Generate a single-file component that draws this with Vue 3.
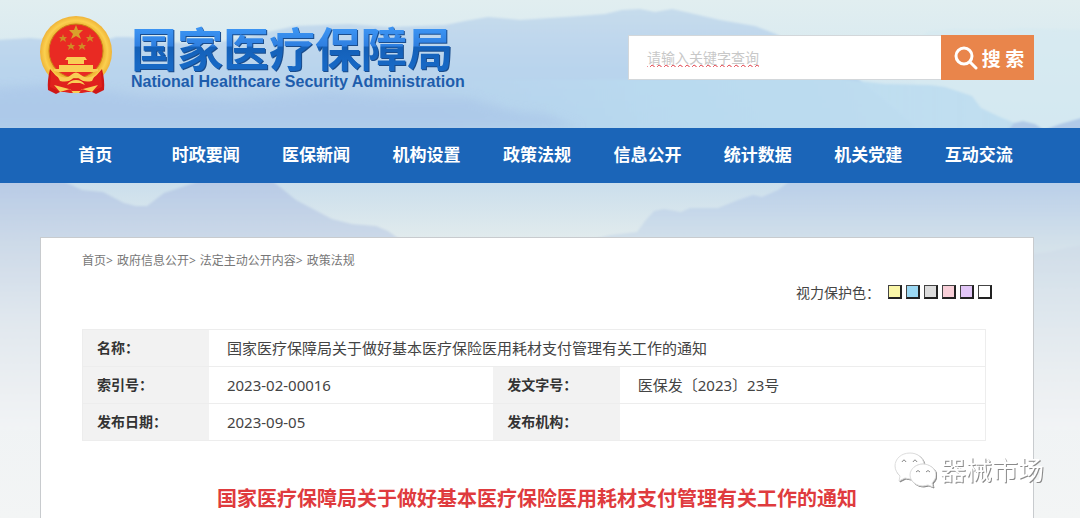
<template>
  <div class="page">
    <svg class="scenery" viewBox="0 0 1080 518" preserveAspectRatio="none" aria-hidden="true">
      <defs>
        <linearGradient id="sky" x1="0" y1="0" x2="0" y2="1">
          <stop offset="0" stop-color="#e1eef0" />
          <stop offset="0.23" stop-color="#cfe5f1" />
          <stop offset="0.35" stop-color="#cadeec" />
          <stop offset="0.46" stop-color="#e1ebed" />
          <stop offset="0.65" stop-color="#edf1f4" />
          <stop offset="1" stop-color="#f3f5f5" />
        </linearGradient>
        <linearGradient id="far" gradientUnits="userSpaceOnUse" x1="0" y1="10" x2="0" y2="128">
          <stop offset="0" stop-color="#c6dbec" />
          <stop offset="0.5" stop-color="#b9d4ed" />
          <stop offset="1" stop-color="#b4d0ea" />
        </linearGradient>
        <linearGradient id="mid" gradientUnits="userSpaceOnUse" x1="430" y1="0" x2="1020" y2="0">
          <stop offset="0" stop-color="#b9dbf0" stop-opacity="0" />
          <stop offset="0.35" stop-color="#b9dbf0" stop-opacity="0.8" />
          <stop offset="1" stop-color="#c0def0" />
        </linearGradient>
        <linearGradient id="near" gradientUnits="userSpaceOnUse" x1="0" y1="182" x2="0" y2="430">
          <stop offset="0" stop-color="#b8cbe6" />
          <stop offset="0.25" stop-color="#cddae8" />
          <stop offset="0.55" stop-color="#e0e7ee" />
          <stop offset="1" stop-color="#f2f4f5" />
        </linearGradient>
        <linearGradient id="right" gradientUnits="userSpaceOnUse" x1="0" y1="182" x2="0" y2="430">
          <stop offset="0" stop-color="#bacfe9" />
          <stop offset="0.25" stop-color="#d3e1ea" />
          <stop offset="0.5" stop-color="#dfe7ed" />
          <stop offset="1" stop-color="#f2f4f5" />
        </linearGradient>
        <linearGradient id="edge" gradientUnits="userSpaceOnUse" x1="0" y1="245" x2="0" y2="400">
          <stop offset="0" stop-color="#d0dde8" />
          <stop offset="1" stop-color="#edf0f3" stop-opacity="0" />
        </linearGradient>
        <filter id="haze" x="-5%" y="-5%" width="110%" height="110%">
          <feGaussianBlur stdDeviation="1" />
        </filter>
        <filter id="mist" x="-5%" y="-20%" width="110%" height="140%">
          <feGaussianBlur stdDeviation="5" />
        </filter>
      </defs>
      <rect width="1080" height="518" fill="url(#sky)" />
      <g filter="url(#haze)">
        <path fill="url(#far)" d="M-5 40 30 38 60 41 100 42 116 37 130 37 160 42 210 44 250 36 295 26 350 24 390 27 445 25 465 21 488 17 520 20 580 16 605 14 622 10 640 9 655 12 672 9 690 13 720 20 755 26 776 34 860 80 920 130 -5 130Z" />
        <path fill="#d6e9f1" opacity=".7" d="M915 39 930 31 955 29 1000 30 1020 28 1085 30 1085 130 915 130Z" />
        <path fill="url(#mid)" d="M430 130 430 80 790 79 840 79 885 84 930 85 945 87 972 96 981 108 1000 117 1015 123 1025 130Z" />
        <path fill="#b1cae8" d="M1008 130 1014 123 1023 121 1035 124 1044 130 1060 124 1085 117 1085 130Z" />
        <path fill="url(#near)" d="M-5 178 65 182 82 190 103 192 124 203 136 206 147 206 164 193 194 183 205 178 268 178 280 187 296 200 332 219 352 224 376 226 388 231 405 243 500 430 -5 430Z" />
        <path fill="url(#right)" d="M590 240 610 235 637 232 645 221 654 211 664 209 681 212 690 208 718 208 738 200 753 195 762 197 778 190 794 178 1085 178 1085 430 590 430Z" />
        <path fill="url(#edge)" d="M1025 255 1050 252 1062 249 1085 244 1085 400 1025 400Z" />
      </g>
      <path fill="#a8c5e8" opacity=".6" filter="url(#mist)" d="M-20 90 60 84 140 96 240 100 330 92 400 98 470 98 510 110 545 114 580 127 -20 127Z" />
      <rect width="1080" height="5" y="178" fill="#1b65b8" />
    </svg>

    <header class="header">
      <a class="brand" href="#">
        <svg class="emblem" viewBox="0 0 74 80" aria-hidden="true">
          <defs>
            <radialGradient id="gold">
              <stop offset="0.7" stop-color="#e9a526" />
              <stop offset="0.87" stop-color="#fbd04f" />
              <stop offset="1" stop-color="#efb338" />
            </radialGradient>
          </defs>
          <circle cx="37" cy="37" r="36" fill="url(#gold)" />
          <path fill="#cf1717" d="M11 54Q8 66 9 75L17 79 21 77H53L57 79 65 75Q66 66 63 54L53 66H21Z" />
          <path fill="#e0211d" d="M12 56Q20 66 31 65L37 62 43 65Q54 66 62 56L63 72 54 76 43 78H31L20 76 11 72Z" />
          <circle cx="37" cy="36" r="27" fill="#e92a23" stroke="#c98418" />
          <path fill="#d9a02b" d="m37 10 2 5h5l-4 4 2 5-5-3-5 3 2-5-4-4h5z" />
          <g fill="#cf8c25">
            <path id="star" d="m24 19 1 3h3l-2 2 1 3-3-2-3 2 1-3-2-2h3z" />
            <use href="#star" x="27" />
            <use href="#star" x="8" y="8" />
            <use href="#star" x="19" y="8" />
          </g>
          <g fill="#f9ce55">
            <path d="M28 42h18l2 3h-3v4H29v-4h-3zM20 50h34v4H20zM15 54h44v2l-4 1H19l-4-1z" />
            <path d="M18 60Q27 65 32 60T42 60Q48 65 56 60L53 66Q44 68 40 63H34Q30 68 21 66Z" />
            <path d="M28 70Q31 65 37 65T46 70L41 68H33ZM15 70 30 74 33 76H41L44 74 59 70 53 77 43 74 40 78H34L31 74 21 77Z" />
          </g>
        </svg>
        <span class="brand-text">
          <span class="brand-cn">国家医疗保障局</span>
          <span class="brand-en">National Healthcare Security Administration</span>
        </span>
      </a>

      <form class="search" @submit.prevent>
        <input v-model="keyword" type="text" aria-label="请输入关键字查询" placeholder="请输入关键字查询" />
        <button type="submit">
          <svg viewBox="0 0 24 24" aria-hidden="true">
            <circle cx="10" cy="10" r="8" />
            <path d="m16 16 6 6" />
          </svg>
          搜 索
        </button>
      </form>
    </header>

    <nav class="nav">
      <a v-for="item in navItems" :key="item" href="#">{{ item }}</a>
    </nav>

    <main class="panel">
      <div class="crumbs">
        <template v-for="(crumb, index) in crumbs" :key="crumb">
          <a href="#">{{ crumb }}</a><span v-if="index < crumbs.length - 1" class="sep">&gt;</span>
        </template>
      </div>

      <div class="eye-care">
        <span>视力保护色：</span>
        <button
          v-for="color in colors"
          :key="color"
          type="button"
          :aria-label="color"
          :style="{ backgroundColor: color }"
          @click="background = color"
        ></button>
      </div>

      <table class="info">
        <colgroup>
          <col class="col-label" />
          <col class="col-value" />
          <col class="col-label" />
          <col />
        </colgroup>
        <tbody>
          <tr>
            <th scope="row">名称：</th>
            <td colspan="3">{{ title }}</td>
          </tr>
          <tr>
            <th scope="row">索引号：</th>
            <td>2023-02-00016</td>
            <th scope="row">发文字号：</th>
            <td>医保发〔2023〕23号</td>
          </tr>
          <tr>
            <th scope="row">发布日期：</th>
            <td>2023-09-05</td>
            <th scope="row">发布机构：</th>
            <td></td>
          </tr>
        </tbody>
      </table>

      <h1>{{ title }}</h1>
    </main>

    <div class="watermark">
      <svg viewBox="0 0 42 36" aria-hidden="true">
        <path d="M16 1C7 1 1 7 1 14c0 4 2 7 5 10l-1 5 6-3 5 1h1c-2-9 4-15 13-15C29 5 23 1 16 1Z" />
        <path d="M29 12c-7 0-13 5-13 11s6 11 13 11l5-1 5 2-1-4c2-2 4-5 4-8 0-6-6-11-13-11Z" />
        <g class="eyes">
          <path d="M8 10q2-4 4 0M19 10q2-4 4 0M22 20q2-3 4 0M32 20q2-3 4 0" />
        </g>
      </svg>
      <span>器械市场</span>
    </div>
  </div>
</template>

<script setup>
import { ref } from 'vue';

const title = '国家医疗保障局关于做好基本医疗保险医用耗材支付管理有关工作的通知';
const navItems = ['首页', '时政要闻', '医保新闻', '机构设置', '政策法规', '信息公开', '统计数据', '机关党建', '互动交流'];
const crumbs = ['首页', '政府信息公开', '法定主动公开内容', '政策法规'];
const colors = ['#faf6a8', '#9bd8f3', '#dcdcdc', '#f8cfd8', '#e2c6f7', '#ffffff'];

const keyword = ref('');
const background = ref('#ffffff');
</script>

<style>
body {
  margin: 0;
}
</style>

<style scoped>
.page {
  box-sizing: border-box;
  color: #444;
  display: flex;
  flex-direction: column;
  font-family: "Noto Sans", "Noto Sans CJK SC", sans-serif;
  min-height: 100vh;
  overflow: hidden;
  position: relative;
}

.scenery {
  height: 100%;
  left: 0;
  position: absolute;
  top: 0;
  width: 100%;
  z-index: -1;
}

a {
  color: inherit;
  text-decoration: none;
}

.header {
  align-items: flex-start;
  box-sizing: border-box;
  display: flex;
  height: 128px;
  justify-content: space-between;
  padding: 15px 46px 0 39px;
}

.brand {
  display: flex;
  gap: 18px;
}

.emblem {
  height: 80px;
  width: 74px;
}

.brand-text {
  display: flex;
  flex-direction: column;
  padding-top: 4px;
}

.brand-cn {
  background: linear-gradient(#3b93f2 20%, #2f7fe0 50%, #1460b8 52%, #1768c4 85%);
  background-clip: text;
  color: transparent;
  filter: drop-shadow(1px 1px 0 #1a4c8c);
  font-family: "Noto Sans CJK SC", sans-serif;
  font-size: 46px;
  font-weight: bold;
  line-height: 54px;
}

.brand-en {
  color: #1e5dac;
  font-family: "Liberation Sans", sans-serif;
  font-size: 16px;
  font-weight: bold;
  line-height: 18px;
}

.search {
  display: flex;
  height: 45px;
  margin-top: 20px;
  width: 406px;
}

.search input {
  background: #fff;
  border: 1px solid #d3d7da;
  border-right: 0;
  box-sizing: border-box;
  flex: 1;
  font-family: inherit;
  font-size: 14px;
  min-width: 0;
  outline: 0;
  padding: 0 18px;
}

.search input::placeholder {
  color: #c8c8c8;
  opacity: 1;
  text-decoration: underline wavy #e0323c 1px;
}

.search button {
  align-items: center;
  background: #e9854b;
  border: 0;
  color: #fff;
  display: flex;
  font-family: "Noto Sans CJK SC", sans-serif;
  font-size: 19px;
  font-weight: bold;
  gap: 4px;
  justify-content: center;
  padding: 0 0 0 3px;
  width: 93px;
}

.search svg {
  fill: none;
  height: 24px;
  stroke: #fff;
  stroke-linecap: round;
  stroke-width: 3;
  width: 24px;
}

.nav {
  background: #1b65b8;
  display: flex;
  padding: 0 46px 0 40px;
}

.nav a {
  color: #fff;
  flex: 1;
  font-size: 17px;
  font-weight: bold;
  line-height: 54px;
  text-align: center;
}

.panel {
  background: #fff;
  border: 1px solid #c8cbce;
  border-bottom: 0;
  box-sizing: border-box;
  flex: 1;
  margin: 55px 46px 0 40px;
  padding: 14px 41px 0;
}

.crumbs {
  color: #777;
  display: flex;
  font-size: 12px;
  line-height: 18px;
}

.sep {
  padding-right: 4px;
}

.eye-care {
  align-items: center;
  display: flex;
  font-size: 14px;
  gap: 4px;
  height: 20px;
  justify-content: flex-end;
  margin-top: 12px;
}

.eye-care span {
  margin-right: 4px;
}

.eye-care button {
  border: 1px solid #444;
  border-bottom: 2px solid #222;
  border-right: 2px solid #222;
  height: 14px;
  padding: 0;
  width: 14px;
}

.info {
  border: 1px solid #ededed;
  border-collapse: collapse;
  margin-top: 27px;
  table-layout: fixed;
  width: calc(100% - 6px);
}

.col-label {
  width: 14%;
}

.col-value {
  width: 31.5%;
}

.info th,
.info td {
  border-bottom: 1px solid #ededed;
  box-sizing: border-box;
  height: 37px;
  line-height: 24px;
  text-align: left;
}

.info th {
  background: #f2f2f2;
  color: #333;
  font-size: 14px;
  padding: 0 14px;
}

.info td {
  font-size: 15px;
  padding: 0 18px;
}

h1 {
  color: #df3b3e;
  font-size: 20px;
  line-height: 30px;
  margin: 43px 0 0;
  text-align: center;
}

.watermark {
  align-items: center;
  bottom: 30px;
  color: #fff;
  display: flex;
  filter: drop-shadow(1px 1px 0 #8a8a8a);
  font-size: 26px;
  gap: 4px;
  line-height: 36px;
  position: absolute;
  right: 36px;
}

.watermark svg {
  fill: #fff;
  height: 36px;
  stroke: #ddd;
  width: 42px;
}

.watermark .eyes {
  fill: none;
  stroke: #888;
}
</style>
